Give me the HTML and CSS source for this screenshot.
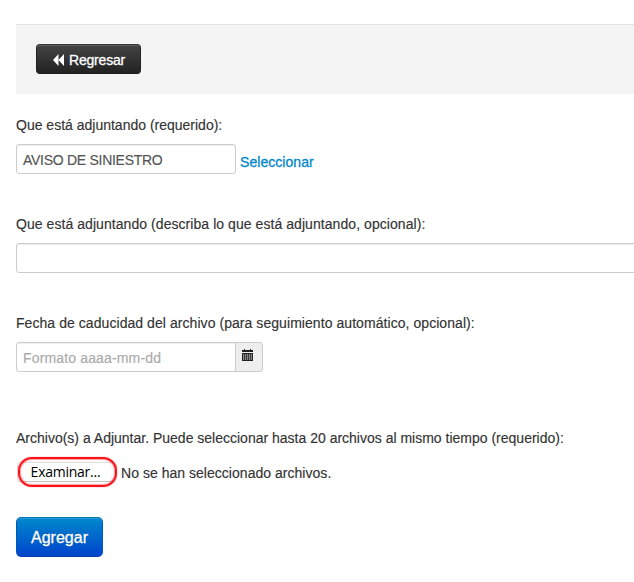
FILE: index.html
```html
<!DOCTYPE html>
<html lang="es">
<head>
<meta charset="utf-8">
<title>Adjuntar archivos</title>
<link rel="stylesheet" href="styles.css">
</head>
<body>
<div class="toolbar">
  <button class="btn-back" type="button">
    <svg class="icon-back" viewBox="0 0 11 12"><path d="M5.500 0v12L0 6zM11 0v12L5.500 6z"/></svg>
    <span class="back-text">Regresar</span>
  </button>
</div>
<form class="form">
  <div class="group">
    <label>Que está adjuntando (requerido):</label>
    <div class="row"><div class="input"><span class="value">AVISO DE SINIESTRO</span></div><a class="link">Seleccionar</a></div>
  </div>
  <div class="group">
    <label class="loose">Que está adjuntando (describa lo que está adjuntando, opcional):</label>
    <div class="input wide"></div>
  </div>
  <div class="group date">
    <label class="loose">Fecha de caducidad del archivo (para seguimiento automático, opcional):</label>
    <div class="row"><div class="input joined"><span class="placeholder">Formato aaaa-mm-dd</span></div><div class="addon">
      <svg class="icon-cal" viewBox="0 0 11 12"><path class="ink" d="M2 0h1v1h5V0h1v1h2v2H0V1h2zM0 4h11v8H0z"/><path class="days" d="M1 6h9M1 8h9M1 10h9"/></svg>
    </div></div>
  </div>
  <div class="group files">
    <label>Archivo(s) a Adjuntar. Puede seleccionar hasta 20 archivos al mismo tiempo (requerido):</label>
    <div class="row file-row"><div class="picker"><button type="button" class="browse">Examinar...</button></div><span class="file-status">No se han seleccionado archivos.</span></div>
  </div>
  <button type="button" class="btn-add">Agregar</button>
</form>
</body>
</html>
```
FILE: styles.css
```css
* { box-sizing: border-box; }
body { margin: 0; padding-top: 24px; width: 634px; height: 582px; overflow: hidden; background: #fff; color: #333; font: 14px/20px "Liberation Sans", Arial, sans-serif; -webkit-text-stroke: .15px; }
button { font-family: inherit; margin: 0; cursor: pointer; }
span, label { white-space: nowrap; }
.toolbar { margin-left: 16px; height: 70px; padding: 19px 20px 20px; background: #f4f4f4; border-top: 1px solid #e2e2e2; }
.btn-back { display: flex; align-items: center; gap: 5px; width: 105px; height: 30px; padding: 1px 0 0 16px; color: #fff; font-size: 14px; line-height: 20px; border: 1px solid #222; border-color: #333 #222 #1c1c1c; border-radius: 4px; background: linear-gradient(#444, #222); box-shadow: inset 0 1px 0 rgba(255,255,255,.15); text-shadow: 0 -1px 0 rgba(0,0,0,.25); -webkit-text-stroke: .3px; }
.back-text { letter-spacing: -.2px; padding-top: 1px; }
.icon-back { width: 11px; height: 12px; fill: #fff; }
.form { margin-left: 16px; padding-top: 21px; }
.group { height: 99px; }
label { display: block; height: 20px; margin-bottom: 9px; }
.loose { letter-spacing: .06px; }
.row { display: flex; }
.input { width: 220px; height: 30px; padding: 5px 6px; color: #555; border: 1px solid #ccc; border-radius: 3px; box-shadow: inset 0 1px 1px rgba(0,0,0,.075); }
.value { letter-spacing: -.28px; }
.wide { width: 640px; }
.joined { border-radius: 3px 0 0 3px; }
.placeholder { color: #aaa; letter-spacing: .15px; }
.link { color: #08c; margin: 8px 0 0 4px; letter-spacing: .05px; -webkit-text-stroke: .3px; }
.addon { width: 28px; height: 30px; margin-left: -1px; padding: 6px 0 0 6px; border: 1px solid #ccc; border-radius: 0 3px 3px 0; background: #eee; }
.icon-cal { display: block; width: 11px; height: 12px; }
.ink { fill: #222; }
.days { fill: none; stroke: #eee; stroke-width: 1.2; stroke-dasharray: 1.200 .75; }
.date { height: 115px; }
.files { height: 89px; }
.file-row { height: 30px; padding-left: 1px; gap: 4px; }
.picker { position: relative; width: 100px; height: 30px; padding-top: 5px; }
.picker::after { content: ""; position: absolute; inset: 0 0 0 1px; border: 2px solid #f9141c; border-radius: 14px; box-shadow: 0 0 1px #f9141c, inset 0 0 1px 1px rgba(249,20,28,.4); pointer-events: none; }
.browse { display: block; width: 100px; height: 20px; padding: 0 3px 0 0; border: 1px solid #ddd; border-bottom-color: #c4c4c4; border-radius: 4px; background: #fff; font: 14px/18px "Open Sans", sans-serif; letter-spacing: -.25px; color: #000; -webkit-text-stroke: 0; }
.file-status { padding-top: 6px; letter-spacing: .03px; }
.btn-add { display: block; width: 87px; height: 40px; padding: 1px 0 0; color: #fff; font-size: 16px; border: 1px solid #04c; border-color: #0077b8 #0058bf #003cb0; border-radius: 5px; background: linear-gradient(#08c, #04c); box-shadow: inset 0 1px 0 rgba(255,255,255,.15); text-shadow: 0 -1px 0 rgba(0,0,0,.25); -webkit-text-stroke: .3px; }
```
